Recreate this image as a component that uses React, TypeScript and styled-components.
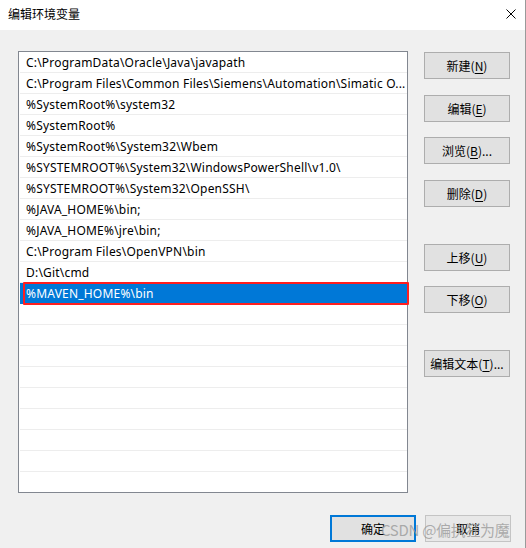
import React from "react";
import styled, { createGlobalStyle } from "styled-components";

const Global = createGlobalStyle`
  html, body { margin: 0; padding: 0; background: #f0f0f0; }
  body { font-family: "Noto Sans", "Noto Sans CJK SC", sans-serif; }
`;

const Window = styled.div`
  position: relative;
  width: 526px;
  height: 548px;
  box-sizing: border-box;
  border-right: 1px solid #9a9a9a;
  background: #f0f0f0;
  display: flex;
  flex-direction: column;
  font-family: "Noto Sans", "Noto Sans CJK SC", sans-serif;
  font-size: 12px;
  color: #000;
  overflow: hidden;
`;

const TitleBar = styled.div`
  height: 30px;
  background: #fff;
  display: flex;
  align-items: center;
  justify-content: space-between;
  padding: 0 9px 0 8px;
  flex: none;
`;

const Title = styled.div`
  font-family: "Noto Sans CJK SC", sans-serif;
  font-size: 12px;
  line-height: 1;
  margin-top: -2px;
`;

const Close = styled.div`
  width: 10px;
  height: 10px;
  margin-top: -2px;
  display: flex;
`;

const Body = styled.div`
  flex: 1;
  display: flex;
  flex-direction: column;
  padding: 21px 14px 0 18px;
`;

const Main = styled.div`
  display: flex;
  gap: 16px;
`;

const List = styled.div`
  width: 388px;
  border: 1px solid #828790;
  background: #fff;
  display: flex;
  flex-direction: column;
`;

const Row = styled.div<{ $selected?: boolean }>`
  position: relative;
  height: 20px;
  border-bottom: 1px solid ${(p) => (p.$selected ? "#0078d7" : "#ededed")};
  margin-left: 1px;
  padding-left: 6px;
  display: flex;
  align-items: center;
  white-space: nowrap;
  overflow: hidden;
  background: ${(p) => (p.$selected ? "#0078d7" : "transparent")};
  color: ${(p) => (p.$selected ? "#fff" : "#000")};
  font-size: 12px;
  letter-spacing: 0.2px;
  &:last-child { border-bottom: none; }
  ${(p) =>
    p.$selected &&
    `
    overflow: visible;
    &::after {
      content: "";
      position: absolute;
      left: 3px;
      right: -2px;
      top: -1px;
      bottom: -2px;
      border: 2px solid #ff1f1f;
      border-radius: 1px;
    }
  `}
`;

const Side = styled.div`
  display: flex;
  flex-direction: column;
  padding-top: 1px;
`;

const Button = styled.button<{ $top?: number; $primary?: boolean; $faded?: boolean }>`
  width: 86px;
  height: 27px;
  margin-top: ${(p) => p.$top ?? 0}px;
  box-sizing: border-box;
  background: ${(p) => (p.$faded ? "#e8e8e8" : "#e1e1e1")};
  border: ${(p) =>
    p.$primary ? "2px solid #0078d7" : p.$faded ? "1px solid #c4c4c4" : "1px solid #adadad"};
  font-family: "Noto Sans CJK SC", sans-serif;
  font-size: 12px;
  color: #000;
  padding: 0;
  display: flex;
  align-items: center;
  justify-content: center;
  u { text-decoration: underline; text-underline-offset: 2px; }
`;

const Footer = styled.div`
  display: flex;
  justify-content: flex-end;
  gap: 9px;
  margin-top: 22px;
`;

const Watermark = styled.div`
  position: absolute;
  left: 381px;
  top: 519px;
  font-family: "Noto Sans CJK SC", sans-serif;
  font-size: 15px;
  color: rgba(150, 150, 150, 0.75);
  white-space: nowrap;
  letter-spacing: -0.3px;
`;

const items = [
  "C:\\ProgramData\\Oracle\\Java\\javapath",
  "C:\\Program Files\\Common Files\\Siemens\\Automation\\Simatic O...",
  "%SystemRoot%\\system32",
  "%SystemRoot%",
  "%SystemRoot%\\System32\\Wbem",
  "%SYSTEMROOT%\\System32\\WindowsPowerShell\\v1.0\\",
  "%SYSTEMROOT%\\System32\\OpenSSH\\",
  "%JAVA_HOME%\\bin;",
  "%JAVA_HOME%\\jre\\bin;",
  "C:\\Program Files\\OpenVPN\\bin",
  "D:\\Git\\cmd",
  "%MAVEN_HOME%\\bin",
];

const rows = [...items, ...Array(9).fill("")];

export default function App() {
  return (
    <>
      <Global />
      <Window>
        <TitleBar>
          <Title>编辑环境变量</Title>
          <Close>
            <svg width="10" height="10" viewBox="0 0 10 10">
              <path d="M0.5 0.5 L9.5 9.5 M9.5 0.5 L0.5 9.5" stroke="#000" strokeWidth="1" />
            </svg>
          </Close>
        </TitleBar>
        <Body>
          <Main>
            <List>
              {rows.map((t, i) => (
                <Row key={i} $selected={i === 11}>
                  {t}
                </Row>
              ))}
            </List>
            <Side>
              <Button>新建(<u>N</u>)</Button>
              <Button $top={16}>编辑(<u>E</u>)</Button>
              <Button $top={15}>浏览(<u>B</u>)...</Button>
              <Button $top={16}>删除(<u>D</u>)</Button>
              <Button $top={37}>上移(<u>U</u>)</Button>
              <Button $top={15}>下移(<u>O</u>)</Button>
              <Button $top={37}>编辑文本(<u>T</u>)...</Button>
            </Side>
          </Main>
          <Footer>
            <Button $primary>确定</Button>
            <Button $faded>取消</Button>
          </Footer>
        </Body>
        <Watermark>CSDN @偏执狂为魔</Watermark>
      </Window>
    </>
  );
}
